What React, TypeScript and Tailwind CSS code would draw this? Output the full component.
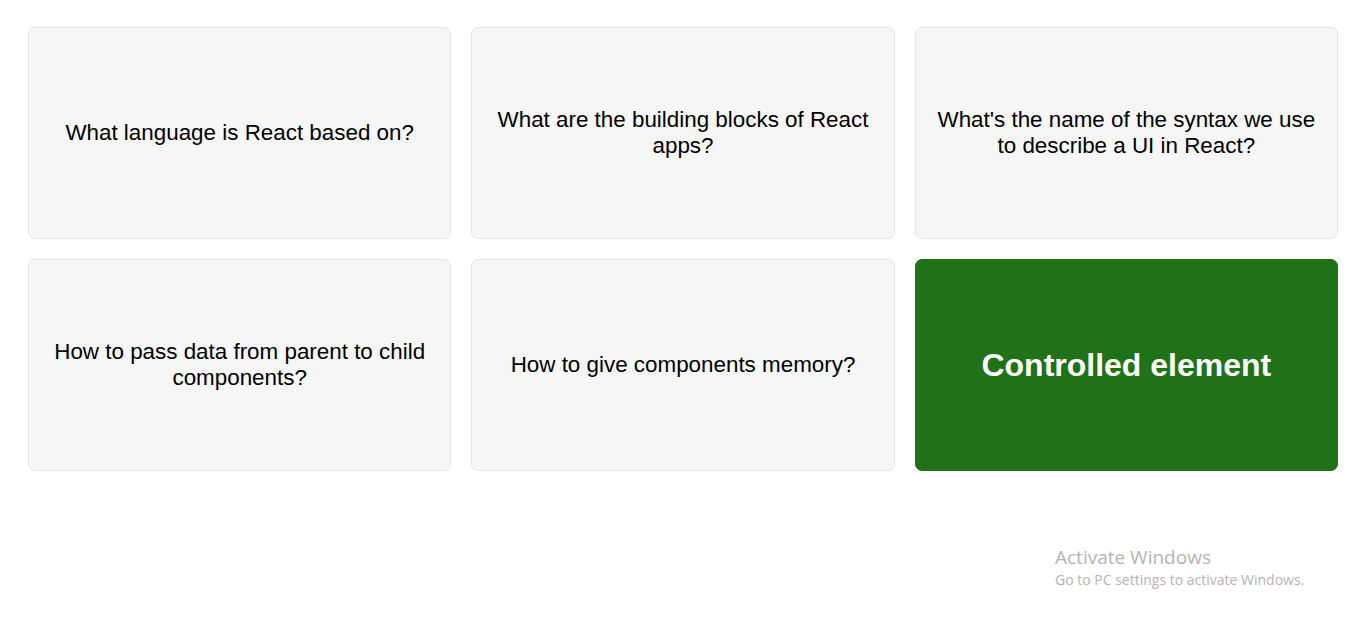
const questions = [
  "What language is React based on?",
  "What are the building blocks of React apps?",
  "What's the name of the syntax we use to describe a UI in React?",
  "How to pass data from parent to child components?",
  "How to give components memory?",
];

function Card({ text, active }: { text: string; active?: boolean }) {
  if (active) {
    return (
      <div className="flex h-[212px] items-center justify-center rounded-[7px] border border-[#217118] bg-[#217118] px-5 text-center text-[32px] font-bold text-white">
        {text}
      </div>
    );
  }
  return (
    <div className="flex h-[212px] items-center justify-center rounded-[7px] border border-[#e6e6e6] bg-[#f6f6f6] px-5 text-center text-[22.4px] leading-[26px] text-black">
      {text}
    </div>
  );
}

export default function App() {
  return (
    <div className="relative h-[624px] w-full bg-white font-['Liberation_Sans',Arial,sans-serif]">
      <div className="grid grid-cols-3 gap-5 px-[28px] pt-[27px]">
        {questions.map((q) => (
          <Card key={q} text={q} />
        ))}
        <Card text="Controlled element" active />
      </div>

      {/* windows watermark */}
      <div className="absolute left-[1055px] top-[545px] font-['Open_Sans',sans-serif] text-[#b4b4b4]">
        <div className="text-[19px] leading-[25px]">Activate Windows</div>
        <div className="text-[14px] leading-[20px]">Go to PC settings to activate Windows.</div>
      </div>
    </div>
  );
}
